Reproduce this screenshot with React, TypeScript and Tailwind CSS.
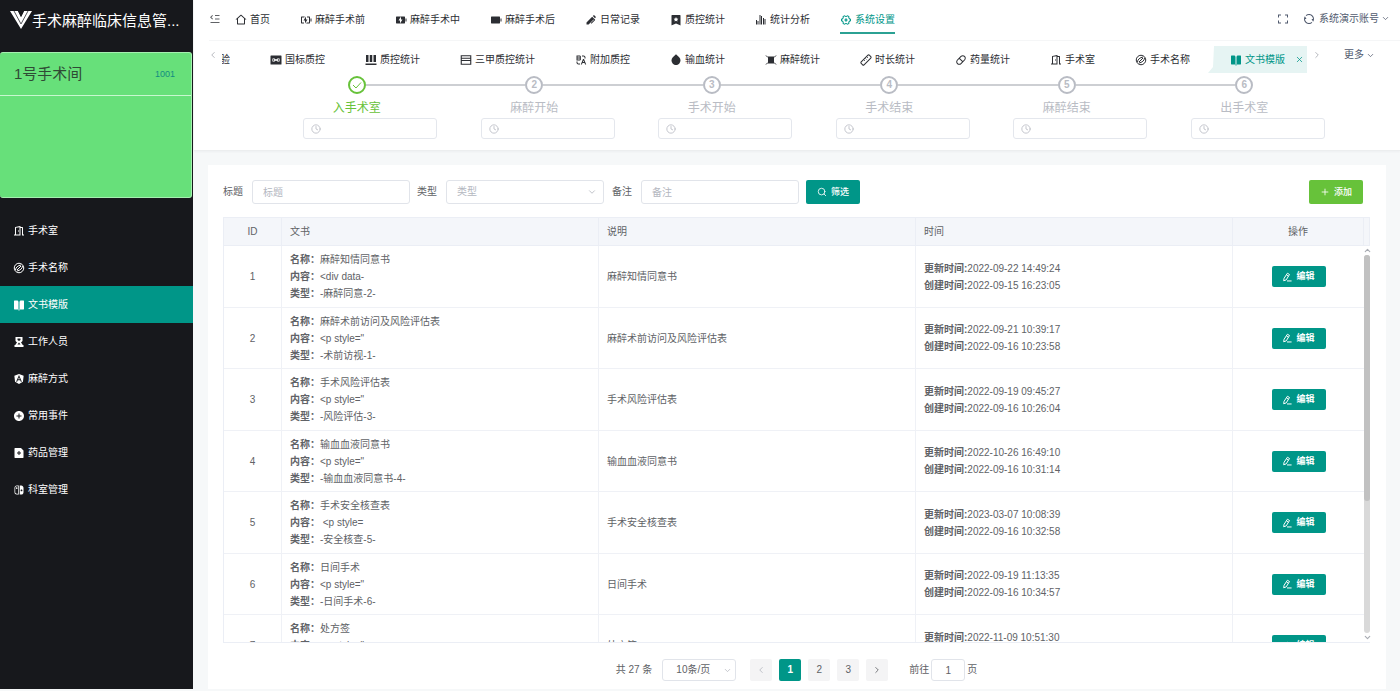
import type { ComponentType, ReactNode } from 'react';
import clsx from 'clsx';
import { ChevronDown, ChevronLeft, ChevronRight, ChevronUp, Clock4, Plus, Search, X } from 'lucide-react';
import {
  RiAB,
  RiAddCircleFill,
  RiAngularjsFill,
  RiBallPenFill,
  RiBarChartGroupedLine,
  RiBatteryChargeFill,
  RiBatteryChargeLine,
  RiBatteryFill,
  RiBookmark3Fill,
  RiBookOpenFill,
  RiCapsuleLine,
  RiDoorOpenLine,
  RiDropFill,
  RiFileAddFill,
  RiFullscreenLine,
  RiHome2Line,
  RiMenuFoldLine,
  RiRefreshLine,
  RiSettings4Line,
  RiSwitchFill,
} from 'react-icons/ri';

interface IconProps {
  className?: string;
}

type Icon = ComponentType<IconProps>;

interface NavItem {
  label: string;
  icon: Icon;
  active?: boolean;
}

function Logo() {
  return (
    <svg viewBox="0 0 22 20" className="h-[20px] w-[22px] shrink-0" aria-hidden="true">
      <path d="M0 1h8l3 6 3-6h8L11 19z" fill="#fff" />
      <path d="M4 1l7 13 7-13" fill="none" stroke="#55565a" strokeWidth="1" />
      <path d="M8 1l3 6 3-6z" fill="#17181c" />
    </svg>
  );
}

function SignalFill({ className }: IconProps) {
  return (
    <svg viewBox="0 0 24 24" className={className} aria-hidden="true">
      <rect x="1" y="3" width="22" height="18" rx="1" fill="currentColor" />
      <circle cx="12" cy="12" r="2.200" fill="#fff" />
      <path d="M7 8c-2 2-2 6 0 8M17 8c2 2 2 6 0 8M9 9v6M15 9v6" fill="none" stroke="#fff" strokeWidth="1.800" />
    </svg>
  );
}

function PillarsFill({ className }: IconProps) {
  return (
    <svg viewBox="0 0 24 24" className={className} fill="currentColor" aria-hidden="true">
      <path d="M2 2h5v14H2zM9.500 2h5v14h-5zM17 2h5v14h-5zM1 19h22v3H1z" />
    </svg>
  );
}

function WindowLine({ className }: IconProps) {
  return (
    <svg viewBox="0 0 24 24" className={className} fill="none" stroke="currentColor" strokeWidth="2.200" aria-hidden="true">
      <path d="M2.500 3.500h19v17h-19zM2.500 8.500h19M2.500 13h19" />
    </svg>
  );
}

function ChipFill({ className }: IconProps) {
  return (
    <svg viewBox="0 0 24 24" className={className} aria-hidden="true">
      <path d="M6 5h12v14H6z" fill="currentColor" />
      <path d="M2 3l4 4M22 3l-4 4M2 21l4-4M22 21l-4-4" stroke="currentColor" strokeWidth="2" />
    </svg>
  );
}

function StickLine({ className }: IconProps) {
  return (
    <svg viewBox="0 0 24 24" className={className} fill="none" stroke="currentColor" strokeWidth="2" aria-hidden="true">
      <rect x="0.500" y="8" width="23" height="8" rx="2" transform="rotate(-45 12 12)" />
      <path d="M8 12l2 2M11 9l2 2M14 6l2 2" strokeWidth="1.500" />
    </svg>
  );
}

function SlashedDisc({ className }: IconProps) {
  return (
    <svg viewBox="0 0 24 24" className={className} fill="none" stroke="currentColor" strokeWidth="2" aria-hidden="true">
      <circle cx="12" cy="12" r="9.500" />
      <path d="M5 16c0-5 5-9 11-10M19 8c0 5-5 9-11 10M8 16l8-8" />
    </svg>
  );
}

function StaffFill({ className }: IconProps) {
  return (
    <svg viewBox="0 0 24 24" className={className} fill="currentColor" fillRule="evenodd" aria-hidden="true">
      <path d="M5 2h14v8l-3 3 3 4v1h2v4H3v-4h2v-1l3-4-3-3zM9 5v3l3 2 3-2V5zM12 13l-3 4h6z" />
    </svg>
  );
}

function EditPen({ className }: IconProps) {
  return (
    <svg viewBox="0 0 24 24" className={className} fill="none" stroke="currentColor" strokeWidth="2.400" aria-hidden="true">
      <path d="M13 3l5 3-8 13-6 2 1-6zM11 7l4 3M12 21.500h11" strokeLinejoin="round" />
    </svg>
  );
}

const MAIN_NAV: NavItem[] = [
  { label: '首页', icon: RiHome2Line },
  { label: '麻醉手术前', icon: RiBatteryChargeLine },
  { label: '麻醉手术中', icon: RiBatteryChargeFill },
  { label: '麻醉手术后', icon: RiBatteryFill },
  { label: '日常记录', icon: RiBallPenFill },
  { label: '质控统计', icon: RiBookmark3Fill },
  { label: '统计分析', icon: RiBarChartGroupedLine },
  { label: '系统设置', icon: RiSettings4Line, active: true },
];

const TABS: NavItem[] = [
  { label: '国标质控', icon: SignalFill },
  { label: '质控统计', icon: PillarsFill },
  { label: '三甲质控统计', icon: WindowLine },
  { label: '附加质控', icon: RiAB },
  { label: '输血统计', icon: RiDropFill },
  { label: '麻醉统计', icon: ChipFill },
  { label: '时长统计', icon: StickLine },
  { label: '药量统计', icon: RiCapsuleLine },
  { label: '手术室', icon: RiDoorOpenLine },
  { label: '手术名称', icon: SlashedDisc },
  { label: '文书模版', icon: RiBookOpenFill, active: true },
];

const SIDE_NAV: NavItem[] = [
  { label: '手术室', icon: RiDoorOpenLine },
  { label: '手术名称', icon: SlashedDisc },
  { label: '文书模版', icon: RiBookOpenFill, active: true },
  { label: '工作人员', icon: StaffFill },
  { label: '麻醉方式', icon: RiAngularjsFill },
  { label: '常用事件', icon: RiAddCircleFill },
  { label: '药品管理', icon: RiFileAddFill },
  { label: '科室管理', icon: RiSwitchFill },
];

const STEPS = ['入手术室', '麻醉开始', '手术开始', '手术结束', '麻醉结束', '出手术室'];

const ROWS = [
  { id: 1, name: '麻醉知情同意书', body: '<div data-', type: '-麻醉同意-2-', updated: '2022-09-22 14:49:24', created: '2022-09-15 16:23:05' },
  { id: 2, name: '麻醉术前访问及风险评估表', body: '<p style="', type: '-术前访视-1-', updated: '2022-09-21 10:39:17', created: '2022-09-16 10:23:58' },
  { id: 3, name: '手术风险评估表', body: '<p style="', type: '-风险评估-3-', updated: '2022-09-19 09:45:27', created: '2022-09-16 10:26:04' },
  { id: 4, name: '输血血液同意书', body: '<p style="', type: '-输血血液同意书-4-', updated: '2022-10-26 16:49:10', created: '2022-09-16 10:31:14' },
  { id: 5, name: '手术安全核查表', body: '\u00a0<p style=', type: '-安全核查-5-', updated: '2023-03-07 10:08:39', created: '2022-09-16 10:32:58' },
  { id: 6, name: '日间手术', body: '<p style="', type: '-日间手术-6-', updated: '2022-09-19 11:13:35', created: '2022-09-16 10:34:57' },
  { id: 7, name: '处方签', body: '<p style="', type: '-处方签-7-', updated: '2022-11-09 10:51:30', created: '2022-09-16 10:36:21' },
];

function Sidebar() {
  return (
    <aside className="flex w-[193px] shrink-0 flex-col bg-[#17181c] text-white">
      <div className="flex h-[52px] items-start pl-[10px] pt-[10px]">
        <Logo />
        <h1 className="whitespace-nowrap text-[15px] leading-[22px]">手术麻醉临床信息管...</h1>
      </div>
      <section className="mr-px h-[146px] rounded-[3px] border border-l-0 border-[#a5f0b0] bg-[#67e07a]">
        <div className="flex h-[43px] items-center justify-between border-b border-[#c8f7cf] pl-[14px] pr-[16px]">
          <h2 className="text-[15px] text-[#2f4a35]">1号手术间</h2>
          <span className="text-[9px] text-[#138c80]">1001</span>
        </div>
      </section>
      <nav className="mt-[14px]">
        {SIDE_NAV.map(({ label, icon: ItemIcon, active }) => (
          <a
            key={label}
            href="#"
            className={clsx('flex h-[37px] items-center gap-[3px] px-[13px] pt-px', active && 'bg-[#009688]')}
          >
            <ItemIcon className="h-[12px] w-[12px]" />
            {label}
          </a>
        ))}
      </nav>
    </aside>
  );
}

function TopBar() {
  return (
    <div className="ml-[15px] flex h-[41px] items-start border-b border-[#f5f6f7]">
      <button type="button" aria-label="收起菜单" className="flex h-[38px] items-center text-[#606266]">
        <RiMenuFoldLine className="h-[12px] w-[12px]" />
      </button>
      <nav className="ml-[14px] flex gap-[30px]">
        {MAIN_NAV.map(({ label, icon: ItemIcon, active }) => (
          <a
            key={label}
            href="#"
            className={clsx(
              'flex h-[34px] items-center gap-[3px] whitespace-nowrap border-b-2 pt-[7px]',
              active ? 'border-[#2ba193] text-[#009688]' : 'border-transparent text-[#2c2e33]',
            )}
          >
            <ItemIcon className="h-[12px] w-[12px]" />
            {label}
          </a>
        ))}
      </nav>
      <div className="ml-auto flex h-[37px] items-center pr-[10px] text-[#515a6e]">
        <button type="button" aria-label="全屏">
          <RiFullscreenLine className="h-[12px] w-[12px]" />
        </button>
        <button type="button" aria-label="刷新" className="ml-[14px]">
          <RiRefreshLine className="h-[12px] w-[12px]" />
        </button>
        <button type="button" className="ml-[4px] flex items-center gap-[2px]">
          系统演示账号
          <ChevronDown className="h-[9px] w-[9px]" />
        </button>
      </div>
    </div>
  );
}

function TabBar() {
  return (
    <div className="flex h-[35px] items-start pl-[14px] pt-[5px]">
      <button type="button" aria-label="向左" className="flex h-[18px] w-[14px] items-center text-[#a8abb2]">
        <ChevronLeft className="h-[10px] w-[10px]" />
      </button>
      <div className="flex gap-[7px] overflow-hidden text-[#2c2e33]">
        {/* previous tab, scrolled out on the left */}
        <a href="#" className="flex h-[27px] items-center pr-[16px]">
          <span className="flex w-[8px] justify-end overflow-hidden whitespace-nowrap">验</span>
        </a>
        {TABS.map(({ label, icon: ItemIcon, active }) => (
          <div
            key={label}
            className={clsx(
              'flex h-[27px] items-center whitespace-nowrap pl-[17px]',
              active
                ? '-ml-[5px] bg-[#e6f4f3] pl-[22px] pr-[3px] text-[#009688] [clip-path:polygon(6px_0,100%_0,100%_100%,0_100%,5px_21px)]'
                : 'pr-[16px]',
            )}
          >
            <a href="#" className="flex items-center gap-[3px]">
              <ItemIcon className="h-[12px] w-[12px]" />
              {label}
            </a>
            {active && (
              <button type="button" aria-label="关闭" className="ml-[10px]">
                <X className="h-[9px] w-[9px]" />
              </button>
            )}
          </div>
        ))}
      </div>
      <button type="button" aria-label="向右" className="ml-[5px] flex h-[18px] items-center text-[#a8abb2]">
        <ChevronRight className="h-[10px] w-[10px]" />
      </button>
      <button type="button" className="ml-auto mr-[25px] flex h-[18px] items-center gap-[2px] text-[#515a6e]">
        更多
        <ChevronDown className="h-[9px] w-[9px]" />
      </button>
    </div>
  );
}

function Steps() {
  return (
    <ol className="flex pl-[74px] pr-[67px]">
      {STEPS.map((title, i) => {
        const done = i === 0;
        return (
          <li key={title} className={clsx('flex-1', done ? 'text-[#67c23a]' : 'text-[#b9bcc4]')}>
            <div className="flex items-center">
              <span className={clsx('h-[2px] flex-1', i > 0 && 'bg-[#cdcfd3]')} />
              <span className="grid h-[18px] w-[18px] place-items-center rounded-full border-2 border-current text-[10px] font-bold leading-none">
                {done ? (
                  <svg viewBox="0 0 12 12" className="h-[12px] w-[12px]" fill="none" stroke="currentColor" aria-hidden="true">
                    <path d="M2 6l3 3 5-5.500" />
                  </svg>
                ) : (
                  i + 1
                )}
              </span>
              <span className={clsx('h-[2px] flex-1', i < STEPS.length - 1 && 'bg-[#cdcfd3]')} />
            </div>
            <label htmlFor={`step-${i}`} className="mt-[5px] block text-center text-[12px] leading-[18px]">
              {title}
            </label>
            <div className="ml-[35px] mt-px flex h-[21px] w-[134px] items-center rounded-[3px] border border-[#e4e7ed] px-[7px]">
              <Clock4 className="h-[10px] w-[10px] shrink-0 text-[#b9bcc4]" />
              <input id={`step-${i}`} type="text" className="ml-[5px] w-full min-w-0 outline-none" />
            </div>
          </li>
        );
      })}
    </ol>
  );
}

const FIELD = 'h-[24px] w-[158px] rounded-[3px] border border-[#e1e4ea] bg-white px-[10px] outline-none placeholder:text-[#b4b7bf]';

function Filters() {
  return (
    <form className="flex h-[24px] items-center text-[#606266]">
      <label htmlFor="title">标题</label>
      <input id="title" placeholder="标题" className={clsx(FIELD, 'ml-[9px]')} />
      <label htmlFor="kind" className="ml-[7px]">类型</label>
      <div className="relative ml-[9px]">
        <select id="kind" defaultValue="" className={clsx(FIELD, 'appearance-none text-[#b4b7bf]')}>
          <option value="">类型</option>
        </select>
        <ChevronDown className="pointer-events-none absolute right-[7px] top-[7px] h-[10px] w-[10px] text-[#b4b7bf]" />
      </div>
      <label htmlFor="remark" className="ml-[8px]">备注</label>
      <input id="remark" placeholder="备注" className={clsx(FIELD, 'ml-[9px]')} />
      <button
        type="button"
        className="ml-[7px] flex h-[24px] w-[54px] items-center justify-center gap-[4px] rounded-[2px] bg-[#009688] text-[9px] font-medium text-white"
      >
        <Search className="h-[10px] w-[10px]" />
        筛选
      </button>
      <button
        type="button"
        className="ml-auto mr-[7px] flex h-[24px] w-[54px] items-center justify-center gap-[4px] rounded-[2px] bg-[#67c23a] text-[9px] font-medium text-white"
      >
        <Plus className="h-[10px] w-[10px]" />
        添加
      </button>
    </form>
  );
}

function Th({ children, center }: { children: ReactNode; center?: boolean }) {
  return (
    <th
      className={clsx(
        'sticky top-0 z-10 h-[28px] border-b border-r border-[#ebeef5] bg-[#f4f6fa] px-[8px] font-normal',
        center ? 'text-center' : 'text-left',
      )}
    >
      {children}
    </th>
  );
}

const TD = 'border-b border-r border-[#eff1f6] px-[8px] leading-[17px]';

function DocumentTable() {
  return (
    <div className="mt-[13px] flex min-h-0 flex-1 border border-r-0 border-[#ebeef5]">
      <div className="min-w-0 flex-1 overflow-y-auto [scrollbar-width:none]">
        <table className="w-full table-fixed border-separate border-spacing-0 text-[#606266]">
          <colgroup>
            <col className="w-[58px]" />
            <col />
            <col />
            <col />
            <col className="w-[131px]" />
          </colgroup>
          <thead>
            <tr>
              <Th center>ID</Th>
              <Th>文书</Th>
              <Th>说明</Th>
              <Th>时间</Th>
              <Th center>操作</Th>
            </tr>
          </thead>
          <tbody>
            {ROWS.map((row) => (
              <tr key={row.id} className="odd:h-[62px] even:h-[61px]">
                <td className={clsx(TD, 'text-center')}>{row.id}</td>
                <td className={TD}>
                  <p><b>名称：</b>{row.name}</p>
                  <p><b>内容：</b>{row.body}</p>
                  <p><b>类型：</b>{row.type}</p>
                </td>
                <td className={TD}>{row.name}</td>
                <td className={TD}>
                  <p><b>更新时间:</b>{row.updated}</p>
                  <p><b>创建时间:</b>{row.created}</p>
                </td>
                <td className={clsx(TD, 'border-r-0')}>
                  <button
                    type="button"
                    className="mx-auto flex h-[21px] w-[54px] items-center justify-center gap-[4px] rounded-[2px] bg-[#009688] text-[9px] font-bold text-white"
                  >
                    <EditPen className="h-[10px] w-[10px]" />
                    编辑
                  </button>
                </td>
              </tr>
            ))}
          </tbody>
        </table>
      </div>
      <div className="flex w-[6px] shrink-0 flex-col items-center text-[#a8abb2]" aria-hidden="true">
        <div className="h-[28px] w-full border-b border-r border-[#ebeef5] bg-[#f4f6fa]" />
        <ChevronUp className="h-[9px] w-[9px]" strokeWidth={3} />
        <div className="w-[6px] flex-1 rounded-[3px] bg-[#d9d9d9]">
          <div className="h-[65%] rounded-[3px] bg-[#c1c1c1]" />
        </div>
        <ChevronDown className="h-[9px] w-[9px]" strokeWidth={3} />
      </div>
    </div>
  );
}

const PAGE_BTN = 'grid h-[22px] w-[22px] place-items-center rounded-[2px]';

function Pagination() {
  return (
    <div className="mt-[16px] flex items-center justify-center text-[#606266]">
      <span>共 27 条</span>
      <div className="relative ml-[10px]">
        <select
          aria-label="每页条数"
          className="h-[22px] w-[74px] appearance-none rounded-[3px] border border-[#e1e4ea] bg-white pl-[13px] outline-none"
        >
          <option>10条/页</option>
        </select>
        <ChevronDown className="pointer-events-none absolute right-[4px] top-[7px] h-[9px] w-[9px] text-[#b4b7bf]" />
      </div>
      <div className="ml-[14px] flex gap-[7px]">
        <button type="button" aria-label="上一页" disabled className={clsx(PAGE_BTN, 'bg-[#f4f4f5] text-[#b4b7bf]')}>
          <ChevronLeft className="h-[10px] w-[10px]" />
        </button>
        {[1, 2, 3].map((page) => (
          <button
            key={page}
            type="button"
            className={clsx(PAGE_BTN, page === 1 ? 'bg-[#009688] font-bold text-white' : 'bg-[#f4f4f5]')}
          >
            {page}
          </button>
        ))}
        <button type="button" aria-label="下一页" className={clsx(PAGE_BTN, 'bg-[#f4f4f5]')}>
          <ChevronRight className="h-[10px] w-[10px]" />
        </button>
      </div>
      <label htmlFor="jump" className="ml-[21px]">前往</label>
      <input
        id="jump"
        defaultValue="1"
        className="mx-[2px] h-[22px] w-[34px] rounded-[3px] border border-[#e1e4ea] text-center outline-none"
      />
      <span>页</span>
    </div>
  );
}

export default function App() {
  return (
    <div className="flex h-screen bg-[#f6f8f9] pb-[2px] font-['Liberation_Sans','Noto_Sans_CJK_SC',sans-serif] text-[10px] leading-[16px]">
      <Sidebar />
      <div className="ml-px flex min-w-0 flex-1 flex-col">
        <header className="h-[151px] shrink-0 border-b border-[#eceeef] bg-white shadow-[0_1px_2px_rgba(0,21,41,0.04)]">
          <TopBar />
          <TabBar />
          <Steps />
        </header>
        <main className="mx-[14px] mt-[14px] flex min-h-0 flex-1 flex-col bg-white pb-[8px] pl-[15px] pr-[16px] pt-[15px]">
          <Filters />
          <DocumentTable />
          <Pagination />
        </main>
      </div>
    </div>
  );
}
